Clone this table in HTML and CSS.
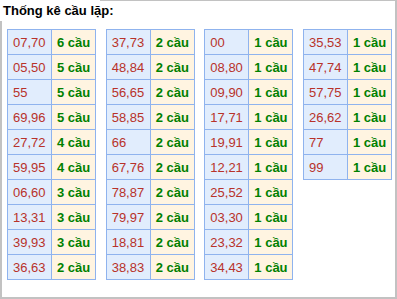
FILE: index.html
```html
<!DOCTYPE html>
<html lang="vi">
<head>
<meta charset="utf-8">
<title>Thống kê cầu lặp</title>
<link rel="stylesheet" href="styles.css">
</head>
<body>
<div class="frame">
  <div class="title">Thống kê cầu lặp:</div>
  <div class="grid">
    <table class="tk">
      <tr><td class="num">07,70</td><td class="cnt">6 cầu</td></tr>
      <tr><td class="num">05,50</td><td class="cnt">5 cầu</td></tr>
      <tr><td class="num">55</td><td class="cnt">5 cầu</td></tr>
      <tr><td class="num">69,96</td><td class="cnt">5 cầu</td></tr>
      <tr><td class="num">27,72</td><td class="cnt">4 cầu</td></tr>
      <tr><td class="num">59,95</td><td class="cnt">4 cầu</td></tr>
      <tr><td class="num">06,60</td><td class="cnt">3 cầu</td></tr>
      <tr><td class="num">13,31</td><td class="cnt">3 cầu</td></tr>
      <tr><td class="num">39,93</td><td class="cnt">3 cầu</td></tr>
      <tr><td class="num">36,63</td><td class="cnt">2 cầu</td></tr>
    </table>
    <table class="tk">
      <tr><td class="num">37,73</td><td class="cnt">2 cầu</td></tr>
      <tr><td class="num">48,84</td><td class="cnt">2 cầu</td></tr>
      <tr><td class="num">56,65</td><td class="cnt">2 cầu</td></tr>
      <tr><td class="num">58,85</td><td class="cnt">2 cầu</td></tr>
      <tr><td class="num">66</td><td class="cnt">2 cầu</td></tr>
      <tr><td class="num">67,76</td><td class="cnt">2 cầu</td></tr>
      <tr><td class="num">78,87</td><td class="cnt">2 cầu</td></tr>
      <tr><td class="num">79,97</td><td class="cnt">2 cầu</td></tr>
      <tr><td class="num">18,81</td><td class="cnt">2 cầu</td></tr>
      <tr><td class="num">38,83</td><td class="cnt">2 cầu</td></tr>
    </table>
    <table class="tk">
      <tr><td class="num">00</td><td class="cnt">1 cầu</td></tr>
      <tr><td class="num">08,80</td><td class="cnt">1 cầu</td></tr>
      <tr><td class="num">09,90</td><td class="cnt">1 cầu</td></tr>
      <tr><td class="num">17,71</td><td class="cnt">1 cầu</td></tr>
      <tr><td class="num">19,91</td><td class="cnt">1 cầu</td></tr>
      <tr><td class="num">12,21</td><td class="cnt">1 cầu</td></tr>
      <tr><td class="num">25,52</td><td class="cnt">1 cầu</td></tr>
      <tr><td class="num">03,30</td><td class="cnt">1 cầu</td></tr>
      <tr><td class="num">23,32</td><td class="cnt">1 cầu</td></tr>
      <tr><td class="num">34,43</td><td class="cnt">1 cầu</td></tr>
    </table>
    <table class="tk">
      <tr><td class="num">35,53</td><td class="cnt">1 cầu</td></tr>
      <tr><td class="num">47,74</td><td class="cnt">1 cầu</td></tr>
      <tr><td class="num">57,75</td><td class="cnt">1 cầu</td></tr>
      <tr><td class="num">26,62</td><td class="cnt">1 cầu</td></tr>
      <tr><td class="num">77</td><td class="cnt">1 cầu</td></tr>
      <tr><td class="num">99</td><td class="cnt">1 cầu</td></tr>
    </table>
  </div>
</div>
</body>
</html>
```
FILE: styles.css
```css
html, body {
  margin: 0;
  padding: 0;
  background: #fff;
}
body {
  font-family: "Liberation Sans", Arial, sans-serif;
}
.frame {
  position: relative;
  box-sizing: border-box;
  width: 397px;
  height: 299px;
  border-style: solid;
  border-color: #c2c2c2;
  border-width: 1px 2px 2px 2px;
  padding: 28px 0 0 5px;
}
.title {
  position: absolute;
  top: -1px;
  left: -2px;
  width: 100px;
  height: 21px;
  background: #fff;
  padding: 3px 0 0 3px;
  box-sizing: border-box;
  font-size: 13px;
  font-weight: bold;
  color: #000;
  white-space: nowrap;
}
.grid {
  display: grid;
  grid-template-columns: repeat(4, 89px);
  column-gap: 9.67px;
  align-items: start;
}
.tk {
  width: 89px;
  table-layout: fixed;
  border-collapse: collapse;
  font-size: 13px;
}
.tk td {
  height: 25px;
  box-sizing: border-box;
  border: 1px solid #8fb3ee;
  padding: 0 0 0 5px;
  white-space: nowrap;
  overflow: hidden;
}
.tk .num {
  width: 50%;
  background: #e1edfd;
  color: #b8322a;
}
.tk .cnt {
  background: #fff4e1;
  color: #008000;
  font-weight: bold;
}
```
